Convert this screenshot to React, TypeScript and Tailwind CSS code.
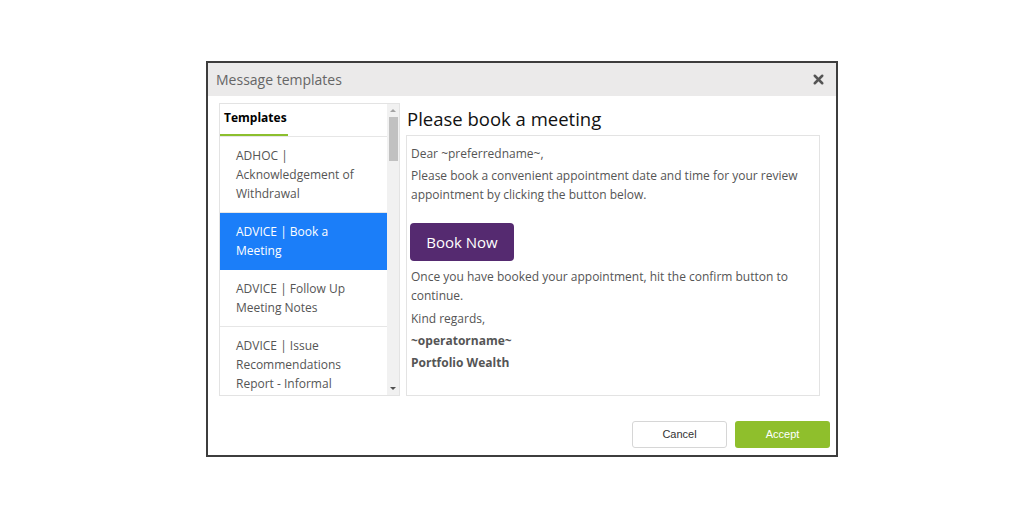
import { X } from "lucide-react";

const templates = [
  "ADHOC | Acknowledgement of Withdrawal",
  "ADVICE | Book a Meeting",
  "ADVICE | Follow Up Meeting Notes",
  "ADVICE | Issue Recommendations Report - Informal",
];

export default function App() {
  return (
    <div
      className="w-[1024px] h-[512px] bg-white pt-[61px] pl-[206px]"
      style={{ fontFamily: '"Open Sans", "Noto Sans", sans-serif' }}
    >
      <div className="w-[632px] h-[396px] border-2 border-[#3d3d3d] flex flex-col bg-white">
        {/* Header */}
        <div className="h-[33px] bg-[#ebeaea] flex items-center justify-between pl-[8px] pr-[10px] shrink-0">
          <span className="text-[14px] text-[#666]">Message templates</span>
          <X className="w-[15px] h-[15px] text-[#555]" strokeWidth={4} />
        </div>

        {/* Body */}
        <div className="flex pl-[11px] pr-[16px] pt-[7px] gap-[6px]">
          {/* Template list */}
          <div className="w-[181px] h-[293px] border border-[#e3e3e3] flex overflow-hidden">
            <div className="flex-1 flex flex-col min-w-0">
              <div className="h-[33px] border-b border-[#e6e6e6] flex items-end">
                <div className="w-[68px] h-[33px] border-b-2 border-[#8cbf2e] pl-[4px] pt-[6px] text-[12px] font-bold text-black">
                  Templates
                </div>
              </div>
              <div className="flex-1 overflow-hidden">
                {templates.map((t, i) => (
                  <div
                    key={t}
                    className={
                      i === 1
                        ? "bg-[#1b7ef9] text-white pl-[16px] pr-[20px] py-[9px] text-[12px] leading-[19px] border-b border-[#1b7ef9]"
                        : "text-[#555] pl-[16px] pr-[20px] py-[9px] text-[12px] leading-[19px] border-b border-[#e6e6e6]"
                    }
                  >
                    {t}
                  </div>
                ))}
              </div>
            </div>
            {/* Scrollbar */}
            <div className="w-[12px] bg-[#f1f1f1] flex flex-col items-center shrink-0">
              <div className="h-[13px] flex items-center justify-center">
                <div className="w-0 h-0 border-l-[3px] border-r-[3px] border-b-[3px] border-l-transparent border-r-transparent border-b-[#a3a3a3]" />
              </div>
              <div className="w-[9px] h-[44px] bg-[#c1c1c1]" />
              <div className="flex-1" />
              <div className="h-[13px] flex items-center justify-center">
                <div className="w-0 h-0 border-l-[3px] border-r-[3px] border-t-[3px] border-l-transparent border-r-transparent border-t-[#505050]" />
              </div>
            </div>
          </div>

          {/* Preview */}
          <div className="flex-1 flex flex-col">
            <h2 className="h-[32px] text-[18.5px] leading-[32px] text-[#111] pl-[1px]">Please book a meeting</h2>
            <div className="h-[261px] border border-[#e3e3e3] pl-[4px] pt-[8px] text-[12px] leading-[19px] text-[#555]">
              <p className="mb-[3px]">Dear ~preferredname~,</p>
              <p className="mb-[19px]">
                Please book a convenient appointment date and time for your review appointment by clicking the button below.
              </p>
              <button className="w-[104px] h-[38px] -ml-[1px] rounded-[4px] bg-[#552a70] text-white text-[15px] mb-[6px]">
                Book Now
              </button>
              <p className="mb-[4px]">Once you have booked your appointment, hit the confirm button to continue.</p>
              <p className="mb-[3px]">Kind regards,</p>
              <p className="mb-[3px] font-bold">~operatorname~</p>
              <p className="font-bold">Portfolio Wealth</p>
            </div>
          </div>
        </div>

        {/* Footer */}
        <div className="flex justify-end gap-[8px] pr-[6px] mt-[25px]">
          <button
            className="w-[95px] h-[27px] rounded-[3px] border border-[#d6d6d6] bg-white text-[11px] text-[#333]"
            style={{ fontFamily: '"Liberation Sans", Arial, sans-serif' }}
          >
            Cancel
          </button>
          <button
            className="w-[95px] h-[27px] rounded-[3px] bg-[#8fbf2c] text-[11px] text-white"
            style={{ fontFamily: '"Liberation Sans", Arial, sans-serif' }}
          >
            Accept
          </button>
        </div>
      </div>
    </div>
  );
}
